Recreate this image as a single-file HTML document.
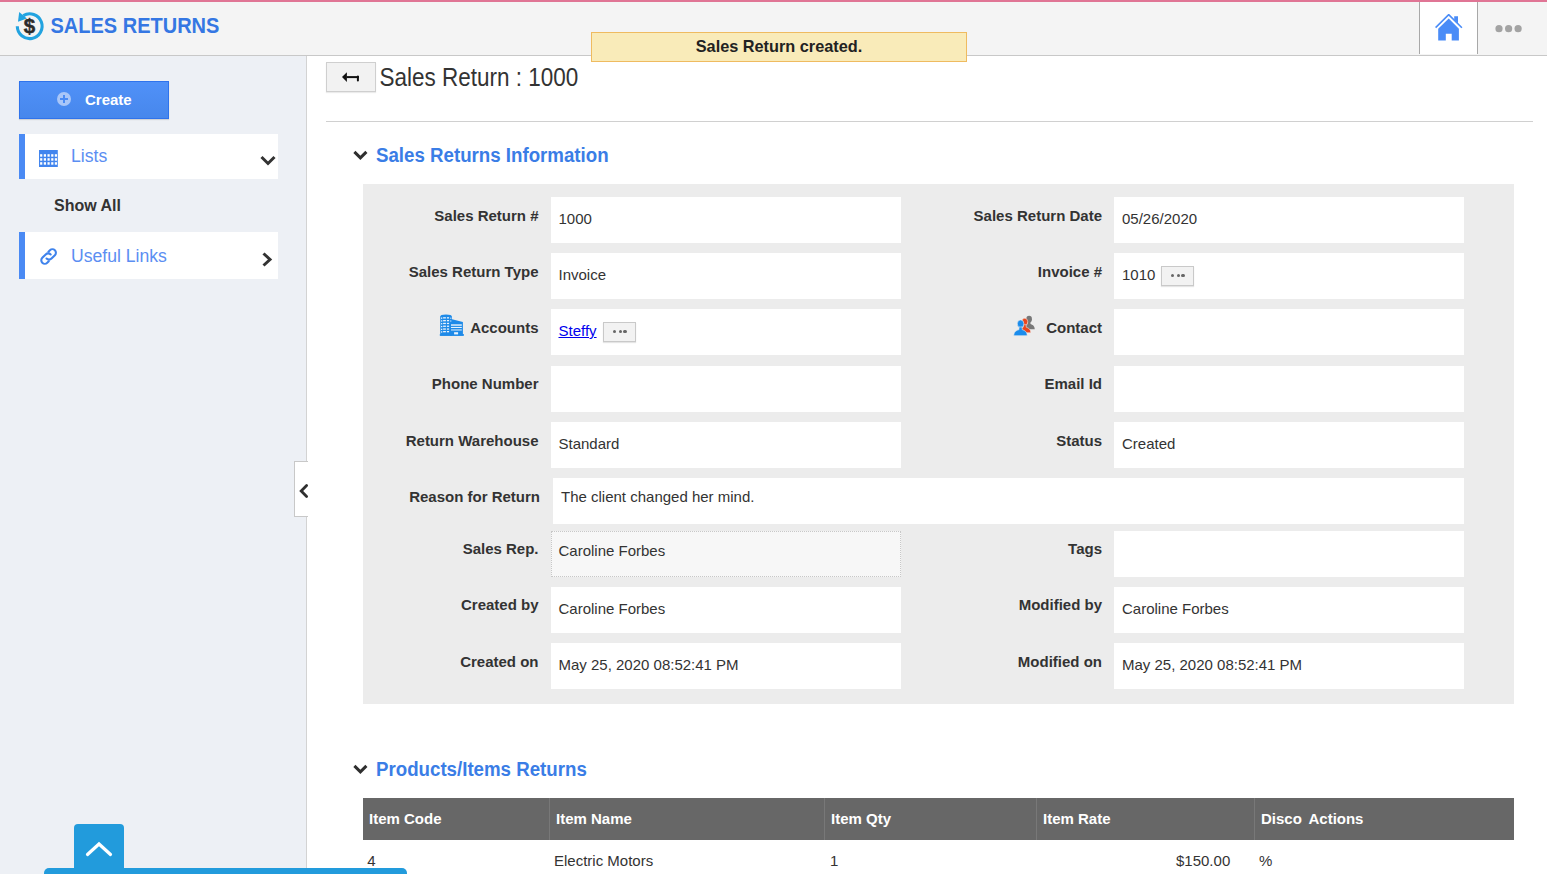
<!DOCTYPE html>
<html><head><meta charset="utf-8">
<style>
*{box-sizing:border-box;margin:0;padding:0}
html,body{width:1547px;height:874px;overflow:hidden;background:#fff;font-family:"Liberation Sans",sans-serif;color:#333}
.abs{position:absolute}
#topline{left:0;top:0;width:1547px;height:2px;background:#e07595}
#header{left:0;top:2px;width:1547px;height:54px;background:#f4f4f4;border-bottom:1px solid #c8c8c8}
#apptitle{left:50.5px;top:13.7px;transform:scaleY(1.09);transform-origin:0 4px;font-size:20px;font-weight:bold;color:#3577e3;white-space:nowrap}
#homebtn{left:1419px;top:2px;width:59px;height:52px;background:#fff;border-left:1px solid #a8a8a8;border-right:1px solid #a8a8a8}
#sidebar{left:0;top:56px;width:307px;height:818px;background:#edf0f5;border-right:1px solid #d3d3d3}
#create{left:19px;top:81px;width:150px;height:38px;background:linear-gradient(#5091f8,#4787ec);border:1px solid #2f73ec;box-shadow:0 1px 1px rgba(0,0,0,.12)}
#create span{position:absolute;left:65px;top:8.5px;color:#fff;font-weight:bold;font-size:15px}
.panel{left:19px;width:259px;background:#fff;border-left:6px solid #4a8af4}
.panel .t{position:absolute;left:46px;font-size:17.6px;color:#5b8ef2;white-space:nowrap}
#showall{left:54px;top:197px;font-size:16px;font-weight:bold;color:#333}
#tab{left:294px;top:461px;width:14px;height:56px;background:#fff;border:1px solid #c8c8c8;border-right:none}
#backbtn{left:326px;top:62px;width:50px;height:30px;background:#f2f2f2;border:1px solid #cfcfcf;box-shadow:0 1px 1px rgba(0,0,0,.08)}
#pagetitle{left:379.5px;top:64px;font-size:22.5px;transform:scaleY(1.12);transform-origin:0 4px;color:#333;white-space:nowrap}
#hr{left:326px;top:121px;width:1207px;height:1px;background:#d0d0d0}
.sect{font-size:18.7px;transform:scaleY(1.09);transform-origin:0 4px;font-weight:bold;color:#3a7de6;white-space:nowrap}
#grey{left:363px;top:184px;width:1151px;height:520px;background:#ececec}
.box{position:absolute;width:350px;height:46px;background:#fff}
.lbl{position:absolute;font-size:15px;font-weight:bold;color:#333;white-space:nowrap;text-align:right}
.val{position:absolute;font-size:15px;color:#333;white-space:nowrap}
#toast{left:591px;top:32px;width:376px;height:30px;background:#f9ebb9;border:1px solid #efbb60;text-align:center;font-size:16.3px;font-weight:bold;color:#222;line-height:27px}
.ell i{position:absolute;top:6.7px;width:3.6px;height:3.6px;border-radius:50%;background:#666}
.ell{position:absolute;width:33px;height:20px;background:#f2f2f2;border:1px solid #c9c9c9;box-shadow:0 1px 1px rgba(0,0,0,.1)}
#thead{left:363px;top:798px;width:1151px;height:42px;background:#676767}
.th{position:absolute;top:0;height:42px;line-height:42px;font-size:15px;font-weight:bold;color:#fff;white-space:nowrap}
.sep{position:absolute;top:0;width:1px;height:42px;background:#787878}
.td{position:absolute;top:852px;font-size:15px;color:#333;white-space:nowrap}
</style></head><body>
<div id="topline" class="abs"></div>
<div id="header" class="abs"></div>
<!-- logo icon -->
<svg class="abs" style="left:12px;top:8px" width="36" height="36" viewBox="0 0 36 36">
  <path d="M5.3 18.3 A12.4 12.4 0 1 0 11.3 7.6" fill="none" stroke="#22a3e0" stroke-width="3.1"/>
  <path d="M7.2 3.9 L6 13.8 L14.9 10.4 Z" fill="#22a3e0"/>
  <text x="17.4" y="24.8" text-anchor="middle" font-family="Liberation Sans" font-weight="bold" font-size="20.5" fill="#2b2b2b" stroke="#2b2b2b" stroke-width="0.5">$</text>
</svg>
<div id="apptitle" class="abs">SALES RETURNS</div>
<div id="homebtn" class="abs"></div>
<svg class="abs" style="left:1435px;top:14px" width="28" height="28" viewBox="0 0 28 28">
  <path d="M0.6 13.6 L13.7 0.6 L26.9 13.8" fill="none" stroke="#4a8cf7" stroke-width="1.6"/>
  <path d="M19.2 2.2 H23 V9.6 L19.2 5.8 Z" fill="#4a8cf7"/>
  <path d="M3.2 14.7 L13.7 4.6 L23.9 14.7 V26.5 H16.7 V19.8 H10.8 V26.5 H3.2 Z" fill="#4a8cf7"/>
</svg>

<svg class="abs" style="left:1490px;top:20px" width="36" height="18" viewBox="0 0 36 18"><g fill="#a3a3a3"><circle cx="9" cy="8.7" r="3.6"/><circle cx="18.6" cy="8.7" r="3.6"/><circle cx="28.1" cy="8.7" r="3.6"/></g></svg>
<div id="sidebar" class="abs"></div>
<div id="create" class="abs">
  <svg style="position:absolute;left:36px;top:9px" width="16" height="16" viewBox="0 0 16 16"><circle cx="8" cy="8" r="7" fill="#a9c6f8"/><path d="M8 4v8M4 8h8" stroke="#4b8bf4" stroke-width="2"/></svg>
  <span>Create</span>
</div>
<div class="abs panel" style="top:134px;height:45px">
  <svg style="position:absolute;left:14.1px;top:15.9px" width="19" height="17" viewBox="0 0 19 17"><rect x="0" y="0" width="18.8" height="17" fill="#4285ee"/><g fill="#fff"><rect x="1.1" y="4.2" width="2.2" height="2.5"/><rect x="4.8" y="4.2" width="2.2" height="2.5"/><rect x="8.5" y="4.2" width="2.2" height="2.5"/><rect x="12.2" y="4.2" width="2.2" height="2.5"/><rect x="15.8" y="4.2" width="2.2" height="2.5"/><rect x="1.1" y="8.2" width="2.2" height="2.5"/><rect x="4.8" y="8.2" width="2.2" height="2.5"/><rect x="8.5" y="8.2" width="2.2" height="2.5"/><rect x="12.2" y="8.2" width="2.2" height="2.5"/><rect x="15.8" y="8.2" width="2.2" height="2.5"/><rect x="1.1" y="12.2" width="2.2" height="2.5"/><rect x="4.8" y="12.2" width="2.2" height="2.5"/><rect x="8.5" y="12.2" width="2.2" height="2.5"/><rect x="12.2" y="12.2" width="2.2" height="2.5"/><rect x="15.8" y="12.2" width="2.2" height="2.5"/></g></svg>
  <span class="t" style="top:12px">Lists</span>
  <svg style="position:absolute;left:235px;top:21px" width="16" height="11" viewBox="0 0 16 11"><path d="M1.5 2 L8 8.5 L14.5 2" fill="none" stroke="#333" stroke-width="3"/></svg>
</div>
<div id="showall" class="abs">Show All</div>
<div class="abs panel" style="top:232px;height:47px">
  <svg style="position:absolute;left:9px;top:12px" width="30" height="26" viewBox="0 0 30 26"><g transform="translate(14.6,12.5) rotate(-45)" fill="none" stroke="#3f83ec" stroke-width="2.1" stroke-linecap="round"><path d="M3.3 -3.5 L5.4 -3.5 A3.5 3.5 0 0 1 5.4 3.5 L0.6 3.5 A3.5 3.5 0 0 1 -2.9 0"/><path d="M-3.3 3.5 L-5.4 3.5 A3.5 3.5 0 0 1 -5.4 -3.5 L-0.6 -3.5 A3.5 3.5 0 0 1 2.9 0"/></g></svg>
  <span class="t" style="top:14px">Useful Links</span>
  <svg style="position:absolute;left:236px;top:20px" width="12" height="15" viewBox="0 0 12 15"><path d="M2.5 1.5 L9 7.5 L2.5 13.5" fill="none" stroke="#333" stroke-width="3"/></svg>
</div>
<div id="tab" class="abs"></div>
<svg class="abs" style="left:298px;top:483px" width="11" height="16" viewBox="0 0 11 16"><path d="M8.6 2.6 L3.2 8 L8.6 13.4" fill="none" stroke="#2f2f2f" stroke-width="2.8" stroke-linecap="round"/></svg>

<!-- main -->
<div id="backbtn" class="abs"></div>
<svg class="abs" style="left:336px;top:66px" width="30" height="22" viewBox="0 0 30 22">
  <path d="M6 11.1 L10.9 6.2 L10.9 16 Z" fill="#111"/>
  <rect x="10.5" y="10.1" width="12.4" height="2" fill="#111"/>
  <path d="M21.9 10.5 V14.6" stroke="#111" stroke-width="2" stroke-linecap="round"/>
</svg>
<div id="pagetitle" class="abs">Sales Return : 1000</div>
<div id="hr" class="abs"></div>

<svg class="abs" style="left:352px;top:149px" width="17" height="13" viewBox="0 0 17 13"><path d="M2.4 2.9 L8.4 8.9 L14.4 2.9" fill="none" stroke="#2f2f2f" stroke-width="3"/></svg>
<div class="abs sect" style="left:376px;top:144px">Sales Returns Information</div>

<div id="grey" class="abs"></div>
<div id="form" class="abs" style="left:0;top:0;width:1547px;height:874px">
  <!-- row1 -->
  <div class="box" style="left:551px;top:197px"></div>
  <div class="box" style="left:1114px;top:197px"></div>
  <div class="lbl" style="right:1008.5px;top:206.5px">Sales Return #</div>
  <div class="val" style="left:558.5px;top:210px">1000</div>
  <div class="lbl" style="right:445px;top:206.5px">Sales Return Date</div>
  <div class="val" style="left:1122px;top:210px">05/26/2020</div>
  <!-- row2 -->
  <div class="box" style="left:551px;top:253px"></div>
  <div class="box" style="left:1114px;top:253px"></div>
  <div class="lbl" style="right:1008.5px;top:262.5px">Sales Return Type</div>
  <div class="val" style="left:558.5px;top:266px">Invoice</div>
  <div class="lbl" style="right:445px;top:262.5px">Invoice #</div>
  <div class="val" style="left:1122px;top:266px">1010</div>
  <div class="ell" style="left:1161px;top:266px"><i style="left:8.5px"></i><i style="left:14.7px"></i><i style="left:19px"></i></div>
  <!-- row3 -->
  <div class="box" style="left:551px;top:309px"></div>
  <div class="box" style="left:1114px;top:309px"></div>
  <div class="lbl" style="right:1008.5px;top:318.5px">Accounts</div>
  <div class="val" style="left:558.5px;top:322px;color:#0000ee;text-decoration:underline">Steffy</div>
  <div class="ell" style="left:603px;top:322px"><i style="left:8.5px"></i><i style="left:14.7px"></i><i style="left:19px"></i></div>
  <div class="lbl" style="right:445px;top:318.5px">Contact</div>
  <!-- row4 -->
  <div class="box" style="left:551px;top:366px"></div>
  <div class="box" style="left:1114px;top:366px"></div>
  <div class="lbl" style="right:1008.5px;top:375px">Phone Number</div>
  <div class="lbl" style="right:445px;top:375px">Email Id</div>
  <!-- row5 -->
  <div class="box" style="left:551px;top:422px"></div>
  <div class="box" style="left:1114px;top:422px"></div>
  <div class="lbl" style="right:1008.5px;top:431.5px">Return Warehouse</div>
  <div class="val" style="left:558.5px;top:435px">Standard</div>
  <div class="lbl" style="right:445px;top:431.5px">Status</div>
  <div class="val" style="left:1122px;top:435px">Created</div>
  <!-- row6 -->
  <div class="box" style="left:553px;top:478px;width:911px"></div>
  <div class="lbl" style="right:1007px;top:488px">Reason for Return</div>
  <div class="val" style="left:561px;top:488px">The client changed her mind.</div>
  <!-- row7 -->
  <div class="box" style="left:551px;top:531px;background:#f7f7f7;border:1px dotted #c8c8c8"></div>
  <div class="box" style="left:1114px;top:531px"></div>
  <div class="lbl" style="right:1008.5px;top:540px">Sales Rep.</div>
  <div class="val" style="left:558.5px;top:542px">Caroline Forbes</div>
  <div class="lbl" style="right:445px;top:540px">Tags</div>
  <!-- row8 -->
  <div class="box" style="left:551px;top:587px"></div>
  <div class="box" style="left:1114px;top:587px"></div>
  <div class="lbl" style="right:1008.5px;top:596px">Created by</div>
  <div class="val" style="left:558.5px;top:600px">Caroline Forbes</div>
  <div class="lbl" style="right:445px;top:596px">Modified by</div>
  <div class="val" style="left:1122px;top:600px">Caroline Forbes</div>
  <!-- row9 -->
  <div class="box" style="left:551px;top:643px"></div>
  <div class="box" style="left:1114px;top:643px"></div>
  <div class="lbl" style="right:1008.5px;top:652.5px">Created on</div>
  <div class="val" style="left:558.5px;top:656px">May 25, 2020 08:52:41 PM</div>
  <div class="lbl" style="right:445px;top:652.5px">Modified on</div>
  <div class="val" style="left:1122px;top:656px">May 25, 2020 08:52:41 PM</div>
</div>

<svg class="abs" style="left:436px;top:311px" width="32" height="28" viewBox="0 0 32 28">
  <g fill="#1e8ae8">
    <path d="M4.2 5.5 Q4.2 3.5 10 3.5 Q15.9 3.5 15.9 5.5 V24.8 H4.2 Z"/>
    <path d="M14.1 7.7 L26.9 10.9 V24.8 H14.1 Z"/>
    <rect x="3.8" y="23.1" width="24.1" height="1.7"/>
  </g>
  <g fill="#fff" opacity="0.9">
    <rect x="5" y="6.5" width="1.3" height="1.3"/><rect x="5" y="9.3" width="1.3" height="1.3"/><rect x="5" y="12.1" width="1.3" height="1.3"/><rect x="5" y="14.9" width="1.3" height="1.3"/><rect x="5" y="17.7" width="1.3" height="1.3"/><rect x="5" y="20.3" width="1.3" height="1.3"/>
    <rect x="7.1" y="6.2" width="2.8" height="1.3"/><rect x="7.1" y="9" width="2.8" height="1.3"/><rect x="7.1" y="11.8" width="2.8" height="1.3"/><rect x="7.1" y="14.6" width="2.8" height="1.3"/><rect x="7.1" y="17.4" width="2.8" height="1.3"/><rect x="7.1" y="20" width="2.8" height="1.3"/>
    <rect x="10.9" y="6.2" width="2.2" height="1.3"/><rect x="10.9" y="9" width="2.2" height="1.3"/><rect x="10.9" y="11.8" width="2.2" height="1.3"/><rect x="10.9" y="14.6" width="2.2" height="1.3"/><rect x="10.9" y="17.4" width="2.2" height="1.3"/><rect x="10.9" y="20" width="2.2" height="1.3"/>
    <rect x="14.3" y="6.6" width="1" height="1.2"/><rect x="14.3" y="9.4" width="1" height="1.2"/>
    <rect x="15" y="13.1" width="10.8" height="2" opacity="0.75"/><rect x="15" y="16" width="10.8" height="1"/><rect x="15" y="18.3" width="10.8" height="1.3" opacity="0.75"/>
    <rect x="18.1" y="21.2" width="4" height="2.2"/>
  </g>
</svg>
<svg class="abs" style="left:1010px;top:312px" width="30" height="28" viewBox="0 0 30 28">
  <g transform="translate(10.1,-2.9) scale(0.85)" fill="#777"><ellipse cx="10.6" cy="11.8" rx="3.3" ry="3.9"/><path d="M9 15 H12.2 V17.6 C14.5 18.5 17.2 19.5 17.2 23.7 H3.8 C3.8 19.5 6.5 18.5 9 17.6 Z"/></g>
  <g transform="translate(5,-1) scale(0.92)" fill="#e8461e" stroke="#ececec" stroke-width="0.6"><ellipse cx="10.6" cy="11.8" rx="3.3" ry="3.9"/><path d="M9 15 H12.2 V17.6 C14.5 18.5 17.2 19.5 17.2 23.7 H3.8 C3.8 19.5 6.5 18.5 9 17.6 Z"/></g>
  <g fill="#1a8cec" stroke="#ececec" stroke-width="0.6"><ellipse cx="10.6" cy="11.8" rx="3.3" ry="3.9"/><path d="M9 15 H12.2 V17.6 C14.5 18.5 17.2 19.5 17.2 23.7 H3.8 C3.8 19.5 6.5 18.5 9 17.6 Z"/></g>
</svg>
<svg class="abs" style="left:352px;top:763px" width="17" height="13" viewBox="0 0 17 13"><path d="M2.4 2.9 L8.4 8.9 L14.4 2.9" fill="none" stroke="#2f2f2f" stroke-width="3"/></svg>
<div class="abs sect" style="left:376px;top:757.5px">Products/Items Returns</div>

<div id="thead" class="abs">
  <div class="th" style="left:6px">Item Code</div>
  <div class="sep" style="left:186px"></div>
  <div class="th" style="left:193px">Item Name</div>
  <div class="sep" style="left:461px"></div>
  <div class="th" style="left:468px">Item Qty</div>
  <div class="sep" style="left:673px"></div>
  <div class="th" style="left:680px">Item Rate</div>
  <div class="sep" style="left:891px"></div>
  <div class="th" style="left:898px;word-spacing:3px">Disco Actions</div>
</div>
<div class="td" style="left:367.2px">4</div>
<div class="td" style="left:554px">Electric Motors</div>
<div class="td" style="left:830px">1</div>
<div class="td" style="left:1176px">$150.00</div>
<div class="td" style="left:1259px">%</div>

<div class="abs" style="left:74px;top:824px;width:50px;height:60px;background:#229bdc;border-radius:4px 4px 0 0"></div>
<svg class="abs" style="left:84px;top:839px" width="30" height="20" viewBox="0 0 30 20"><path d="M3.5 15.5 L15 5 L26.5 15.5" fill="none" stroke="#fff" stroke-width="3.2" stroke-linecap="round"/></svg>
<div class="abs" style="left:44px;top:868px;width:363px;height:10px;background:#229bdc;border-radius:5px 5px 0 0"></div>

<div id="toast" class="abs">Sales Return created.</div>
</body></html>
